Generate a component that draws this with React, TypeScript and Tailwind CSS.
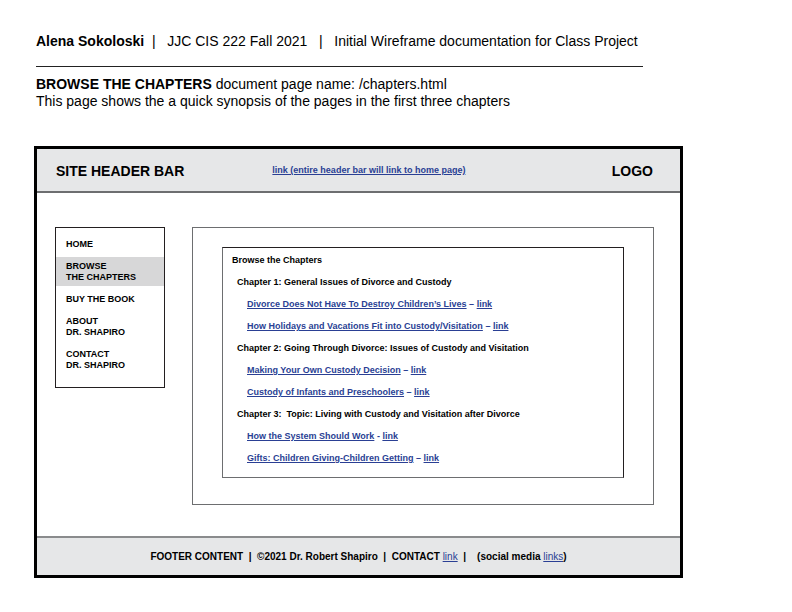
import React from "react";

const LINK = "text-[#2a3f94] underline underline-offset-[1px]";

function NavItem({ lines, active }: { lines: string[]; active?: boolean }) {
  return (
    <div className={`px-[10px] py-[3.5px] ${active ? "bg-[#d7d7d8]" : ""}`}>
      {lines.map((l) => (
        <div key={l} className="leading-[11px]">
          {l}
        </div>
      ))}
    </div>
  );
}

function ChapterLink({ title, sep = "–" }: { title: string; sep?: string }) {
  return (
    <div className="pl-[15px] leading-[22px] text-[#2a3f94]">
      <span className="underline underline-offset-[1px]">{title}</span>
      <span> {sep} </span>
      <span className="underline underline-offset-[1px]">link</span>
    </div>
  );
}

function Chapter({ text }: { text: string }) {
  return <div className="pl-[5px] leading-[22px] whitespace-pre">{text}</div>;
}

export default function App() {
  return (
    <div
      className="w-[792px] h-[612px] bg-white text-black relative overflow-hidden"
      style={{ fontFamily: '"Liberation Sans", Arial, sans-serif' }}
    >
      {/* Document header */}
      <div className="pl-[36px] pt-[33px] text-[14px]">
        <div className="leading-[16px] whitespace-pre">
          <span className="font-bold">Alena Sokoloski</span>
          {"  |   JJC CIS 222 Fall 2021   |   Initial Wireframe documentation for Class Project"}
        </div>
        <div className="mt-[17px] w-[607px] h-px bg-[#222]" />
        <div className="mt-[9px] leading-[17px]">
          <span className="font-bold">BROWSE THE CHAPTERS</span> document page name: /chapters.html
        </div>
        <div className="leading-[17px]">
          This page shows the a quick synopsis of the pages in the first three chapters
        </div>
      </div>

      {/* Wireframe */}
      <div className="ml-[34px] mt-[36px] w-[649px] h-[432px] border-[3px] border-black flex flex-col">
        <div className="h-[44px] bg-[#e6e7e8] border-b-[2px] border-[#6d6e70] flex items-center pt-[2px] pl-[19px] pr-[27px]">
          <span className="text-[14px] font-bold">SITE HEADER BAR</span>
          <span className={`ml-[88px] text-[9px] font-bold ${LINK}`}>
            link (entire header bar will link to home page)
          </span>
          <span className="ml-auto text-[14px] font-bold">LOGO</span>
        </div>

        <div className="flex-1 flex pl-[18px] pt-[34px] gap-[27px]">
          <div className="w-[110px] h-[161px] border border-[#231f20] pt-[7px] flex flex-col gap-[4px] text-[9px] font-bold">
            <NavItem lines={["HOME"]} />
            <NavItem lines={["BROWSE", "THE CHAPTERS"]} active />
            <NavItem lines={["BUY THE BOOK"]} />
            <NavItem lines={["ABOUT", "DR. SHAPIRO"]} />
            <NavItem lines={["CONTACT", "DR. SHAPIRO"]} />
          </div>

          <div className="w-[462px] h-[278px] border-[1.5px] border-[#6d6e70] pt-[19px] pl-[29px]">
            <div className="w-[402px] h-[231px] border border-[#231f20] border-l-[#6d6e70] border-b-[#6d6e70] pl-[9px] pt-[1px] text-[9px] font-bold">
              <div className="leading-[22px]">Browse the Chapters</div>
              <Chapter text="Chapter 1: General Issues of Divorce and Custody" />
              <ChapterLink title="Divorce Does Not Have To Destroy Children’s Lives" />
              <ChapterLink title="How Holidays and Vacations Fit into Custody/Visitation" />
              <Chapter text="Chapter 2: Going Through Divorce: Issues of Custody and Visitation" />
              <ChapterLink title="Making Your Own Custody Decision" />
              <ChapterLink title="Custody of Infants and Preschoolers" />
              <Chapter text="Chapter 3:  Topic: Living with Custody and Visitation after Divorce" />
              <ChapterLink title="How the System Should Work" sep="-" />
              <ChapterLink title="Gifts: Children Giving-Children Getting" />
            </div>
          </div>
        </div>

        <div className="h-[39px] bg-[#e6e7e8] border-t-[2px] border-[#8a8b8d] flex items-center justify-center text-[10px] font-bold whitespace-pre">
          <span>
            {"FOOTER CONTENT  |  ©2021 Dr. Robert Shapiro  |  CONTACT "}
            <span className={`font-normal ${LINK}`}>link</span>
            {"  |    (social media "}
            <span className={`font-normal ${LINK}`}>links</span>
            {")"}
          </span>
        </div>
      </div>
    </div>
  );
}
